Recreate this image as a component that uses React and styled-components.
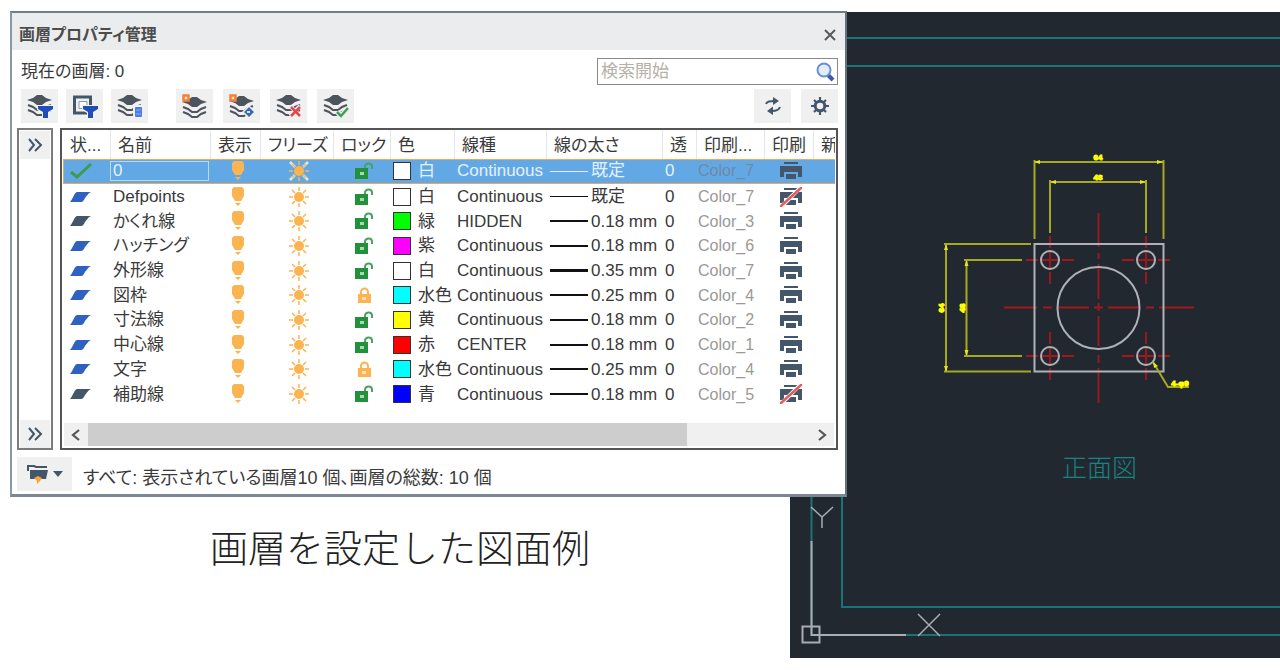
import React from 'react'
import styled, { createGlobalStyle, css } from 'styled-components'

const GlobalStyle = createGlobalStyle`
  * {
    box-sizing: border-box;
  }

  body {
    margin: 0;
    background: #fff;
    color: #3a3a3a;
    font-family: 'Liberation Sans', 'Noto Sans CJK JP', sans-serif;
    font-size: 17px;
    line-height: 20px;
    font-feature-settings: 'palt';
  }

  button, input {
    font: inherit;
    font-feature-settings: inherit;
    color: inherit;
    border: 0;
    padding: 0;
    margin: 0;
    background: none;
  }

  svg {
    display: block;
    flex: none;
  }
`

// The dialog overlaps the left edge of the drawing by one shared column
const Page = styled.main`
  display: grid;
  grid-template-columns: minmax(0, 780fr) 57px minmax(0, 433fr);
  grid-template-rows: auto 1fr;
  padding: 11px 0 11px 10px;
`

const Dialog = styled.section`
  grid-area: 1 / 1 / 2 / 3;
  z-index: 1;
  background: #fff;
  border-style: solid;
  border-width: 2px 2px 3px;
  border-color: #6f7d8f #66717f #7d8793 #8b98a8;
`

const TitleBar = styled.header`
  display: flex;
  align-items: center;
  justify-content: space-between;
  height: 37px;
  padding: 6px 8px 0 7px;
  background: #ebeced;
`

const Title = styled.h1`
  margin: 0;
  font-size: 16px;
  font-weight: 700;
  color: #4c4c4c;
`

const Info = styled.div`
  display: flex;
  align-items: center;
  justify-content: space-between;
  padding: 8px 7px 4px 9px;
`

const SearchBox = styled.label`
  display: flex;
  align-items: center;
  width: 241px;
  height: 27px;
  padding: 0 2px 0 3px;
  border: 1px solid #8a8a8a;
  background: #fff;
`

const SearchInput = styled.input`
  flex: 1;
  min-width: 0;
  outline: none;

  &::placeholder {
    color: #b5b1a6;
    opacity: 1;
  }
`

const Toolbar = styled.div`
  display: flex;
  gap: 28px;
  padding: 0 7px 0 9px;
`

const ToolGroup = styled.div`
  display: flex;
  gap: ${props => props.$gap}px;
  margin-left: ${props => props.$end ? 'auto' : 0};
`

const ToolButton = styled.button`
  display: flex;
  align-items: center;
  justify-content: center;
  width: 37px;
  height: 34px;
  background: #f0f0f0;
`

const Body = styled.div`
  display: flex;
  gap: 7px;
  padding: 5px 7px 7px 5px;
`

const FilterStrip = styled.div`
  display: flex;
  flex-direction: column;
  justify-content: space-between;
  width: 36px;
  border: 2px solid #7b7b7b;
  padding: 1px 1px 0;
`

const StripButton = styled.button`
  display: flex;
  align-items: center;
  justify-content: center;
  height: 28px;
  background: #f0f0f0;
`

const ListPanel = styled.div`
  flex: 1;
  min-width: 0;
  border: 2px solid #555;
  padding: 0 1px 2px;
`

const Table = styled.table`
  width: 100%;
  height: 276px;
  table-layout: fixed;
  border-collapse: separate;
  border-spacing: 0;
`

const HeadCell = styled.th`
  width: ${props => props.$width ? `${props.$width}px` : 'auto'};
  height: 29px;
  padding: 2px 0 0 7px;
  border-left: 1px solid #e6e6e6;
  font-weight: 400;
  text-align: left;
  white-space: nowrap;
  overflow: hidden;

  &:first-child {
    border-left: 0;
  }
`

const Cell = styled.td`
  padding: 1px 0 0 3px;
  line-height: 21px;
  white-space: nowrap;
`

const Row = styled.tr`
  ${props => props.$selected && css`
    color: #e4f1fc;
    background: #62a8e5;

    & > ${Cell} {
      padding-top: 0;
      padding-bottom: 0;
      border-top: 1px solid #eda75c;
      border-bottom: 1px solid #eda75c;
      line-height: 20px;
    }

    & > ${Cell}:first-child {
      border-left: 1px solid #eda75c;
    }
  `}
`

const StatusCell = styled(Cell)`
  padding-left: 6px;
`

const IconCell = styled(Cell)`
  padding-left: 5px;

  & > svg {
    margin: 0 auto;
  }
`

const StyleCell = styled(Cell)`
  padding-left: 2px;
  color: ${props => props.$selected ? '#6f8aa5' : '#999'};
  font-size: 16px;
`

const NameInput = styled.input`
  display: block;
  width: 99px;
  height: 20px;
  margin-left: -3px;
  padding-left: 2px;
  border: 1px solid #b9d9f5;
  outline: none;
`

const Pair = styled.div`
  display: flex;
  align-items: center;
  gap: ${props => props.$gap}px;
`

const Swatch = styled.span`
  width: 18px;
  height: 18px;
  border: 1px solid #333;
  background: ${props => props.$color};
`

const Weight = styled.span`
  width: 38px;
  height: ${props => props.$size}px;
  margin-left: 1px;
  background: ${props => props.$light ? '#e4f1fc' : '#111'};
`

const ScrollBar = styled.div`
  display: flex;
  align-items: stretch;
  height: 23px;
  margin: 17px 1px 0;
  background: #f0f0f0;
`

const ScrollButton = styled.button`
  display: flex;
  align-items: center;
  justify-content: center;
  width: 24px;
`

const ScrollTrack = styled.div`
  flex: 1;
`

const ScrollThumb = styled.div`
  width: 83%;
  height: 100%;
  background: #cdcdcd;
`

const Footer = styled.footer`
  display: flex;
  align-items: center;
  gap: 11px;
  padding: 0 5px 3px;
`

const StateButton = styled.button`
  display: flex;
  align-items: center;
  justify-content: center;
  gap: 4px;
  width: 55px;
  height: 34px;
  background: #f0f0f0;
`

const StatusText = styled.p`
  margin: 0;
  padding-top: 8px;
  font-size: 18px;
`

const Caption = styled.p`
  grid-area: 2 / 1 / 3 / 2;
  margin: 0;
  padding-top: 21px;
  font-family: 'Noto Sans CJK JP', sans-serif;
  font-size: 38px;
  font-weight: 300;
  line-height: 56px;
  font-feature-settings: normal;
  text-align: center;
  color: #222;
`

const Drawing = styled.svg`
  grid-area: 1 / 2 / 3 / 4;
  width: 100%;
  height: auto;
  margin-top: 1px;
  background: #212830;
`

const SLATE = '#44566a'
const INK = '#4c545e'

const Stack = ({ shift = 0 }) => (
  <g>
    <path d={`M0 ${6 + shift} L6 ${4 + shift} L10 ${1 + shift} H15 L19 ${4 + shift} L25 ${6 + shift} L19 ${8 + shift} L15 ${11 + shift} H10 L6 ${8 + shift} Z`} fill={INK} />
    <path d={`M1 ${11 + shift} L6 ${13 + shift} L10 ${16 + shift} H15 L19 ${13 + shift} L24 ${11 + shift} M1 ${16 + shift} L6 ${18 + shift} L10 ${21 + shift} H15 L19 ${18 + shift} L24 ${16 + shift}`} fill="none" stroke={INK} strokeWidth="2" />
  </g>
)

const ToolIcon = ({ children }) => <svg width="26" height="24" viewBox="0 0 26 24">{children}</svg>

const Spark = () => <rect x="1.5" y="1.5" width="5" height="5" fill="#ffe9b0" stroke="#f08040" strokeWidth="2.5" />

const Funnel = () => (
  <g>
    <path d="M10 11h16v5l-5 3v5h-6v-5l-5-3z" fill="#f0f0f0" />
    <path d="M11 12h15v3l-5 3v6h-5v-6l-5-3z" fill="#1f4fb5" />
  </g>
)

const filterTools = [
  ['新規プロパティ フィルター', <><Stack /><Funnel /></>],
  ['新規グループ フィルター', <><path d="M2.500 3h16v16h-16z" fill="none" stroke={SLATE} strokeWidth="3" /><path d="M7 7.500h8v7H7z" fill="#fff" stroke="#8b97a5" strokeWidth="1" /><Funnel /></>],
  ['画層状態管理', <><Stack /><rect x="16" y="11" width="10" height="13" fill="#f0f0f0" /><rect x="18" y="13" width="7" height="10" rx="1" fill="#4d79ea" /><path d="M19 16h5M19 20h5" stroke="#8fb0fa" /></>]
]

const layerTools = [
  ['新規作成', <><Stack shift={2} /><Spark /></>],
  ['新規作成 (フリーズ)', <><Stack shift={1} /><Spark /><path d="M20 12l6 6-6 6-6-6z" fill="#3d68b8" stroke="#f0f0f0" strokeWidth="1.500" /><path d="M18 18h3" stroke="#d5e2fa" strokeWidth="2" /></>],
  ['削除', <><Stack /><path d="M14 12l10 10M24 12L14 22" stroke="#f0f0f0" strokeWidth="4" /><path d="M15 13l9 9M24 13l-9 9" stroke="#e0484e" strokeWidth="2.500" /></>],
  ['現在に設定', <><Stack /><path d="M14 18l4 4 7-8" fill="none" stroke="#f0f0f0" strokeWidth="5" /><path d="M14 18l4 4 7-8" fill="none" stroke="#3f9f56" strokeWidth="2.500" /></>]
]

const RefreshIcon = () => (
  <svg width="18" height="18" viewBox="0 0 18 18" fill="none" stroke={SLATE} strokeWidth="2">
    <path d="M2 7c1-3 4-3 8-3" />
    <path d="M9 0l6 4-6 4z" fill={SLATE} stroke="none" />
    <path d="M16 10c-1 3-4 4-8 4" />
    <path d="M9 9.500L3 14l6 4z" fill={SLATE} stroke="none" />
  </svg>
)

const GearIcon = () => (
  <svg width="18" height="18" viewBox="0 0 18 18" fill="none" stroke={SLATE}>
    <circle cx="9" cy="9" r="4.800" strokeWidth="3" />
    <path d="M9 0v4M9 14v4M0 9h4M14 9h4M3 3l2 2M13 13l2 2M15 3l-2 2M5 13l-2 2" strokeWidth="2.200" />
  </svg>
)

const SearchIcon = () => (
  <svg width="20" height="20" viewBox="0 0 20 20">
    <path d="M12 12l6 6" stroke="#3b5da8" strokeWidth="4" />
    <circle cx="9" cy="8" r="6.500" fill="#e3ecfa" stroke="#6a8fd0" strokeWidth="2" />
  </svg>
)

const CloseIcon = () => (
  <svg width="14" height="14" viewBox="0 0 14 14">
    <path d="M2 2l10 10M12 2L2 12" stroke="#5a5a5a" strokeWidth="2" />
  </svg>
)

const DoubleChevron = () => (
  <svg width="16" height="14" viewBox="0 0 16 14">
    <path d="M2 1l5 6-5 6M8 1l6 6-6 6" fill="none" stroke={SLATE} strokeWidth="2" />
  </svg>
)

const Chevron = ({ left }) => (
  <svg width="10" height="12" viewBox="0 0 10 12">
    <path d={left ? 'M8 1L2 6l6 5' : 'M2 1l6 5-6 5'} fill="none" stroke="#555" strokeWidth="2.200" />
  </svg>
)

const StateIcon = () => (
  <svg width="22" height="20" viewBox="0 0 22 20">
    <path d="M1 7V2h6l2 1h11" fill="none" stroke={SLATE} strokeWidth="2" />
    <path d="M3 6h18l-2 9H3z" fill={SLATE} />
    <path d="M7 14l4-2 4 2-2 3-3 3v-3z" fill="#f7a63a" />
  </svg>
)

const CheckIcon = () => (
  <svg width="22" height="16" viewBox="0 0 22 16">
    <path d="M1 9l6 5L21 1" fill="none" stroke="#3d9b4c" strokeWidth="3" />
  </svg>
)

const LayerIcon = ({ used }) => (
  <svg width="23" height="14" viewBox="0 0 23 14">
    <path d="M8 2h14c-3 1-4 4-6 6-1 2-2 4-4 4H1c3-3 4-9 7-10z" fill={used ? '#2f62c0' : '#44566a'} />
  </svg>
)

const BulbIcon = () => (
  <svg width="14" height="20" viewBox="0 0 14 20">
    <path d="M3 0h8l2 2v7l-3 5H4L1 9V2z" fill="#fbb450" />
    <path d="M4 16h6l-3 3z" fill="#fbb450" />
  </svg>
)

const SunIcon = ({ boxed }) => (
  <svg width="20" height="20" viewBox="0 0 20 20">
    {boxed && <path d="M1 1l5 5M19 1l-5 5M1 19l5-5M19 19l-5-5" stroke="#e3edd8" strokeWidth="2.500" />}
    <circle cx="10" cy="10" r="5" fill="#fbb450" />
    <path d="M10 0v4M10 16v4M0 10h4M16 10h4M3 3l3 3M17 3l-3 3M3 17l3-3M17 17l-3-3" stroke="#fbb450" strokeWidth="1.500" />
  </svg>
)

const LockIcon = ({ locked }) => (
  locked
    ? <svg width="20" height="18" viewBox="0 0 20 18">
      <path d="M7 9V6a3.500 3.500 0 0 1 7 0v3" fill="none" stroke="#fbb450" strokeWidth="2" />
      <rect x="4" y="8" width="13" height="9" fill="#fbb450" />
      <rect x="8" y="11" width="4" height="3" fill="#fde2b8" />
    </svg>
    : <svg width="20" height="18" viewBox="0 0 20 18">
      <path d="M11 7V5c0-4 6-5 7-1v3" fill="none" stroke="#45a560" strokeWidth="2" />
      <rect x="1" y="6" width="13" height="11" fill="#23913c" />
      <rect x="6" y="10" width="4" height="3" fill="#a5dab0" />
    </svg>
)

const PrinterIcon = ({ off }) => (
  <svg width="22" height="20" viewBox="0 0 22 20">
    <path d="M4 2h14" stroke={SLATE} strokeWidth="2" />
    <path d="M0 5h22v11h-4v-5H4v5H0z" fill={SLATE} />
    <path d="M6 13h10v5H6z" fill={SLATE} />
    {off && <path d="M1 20L21 0" stroke="#fff" strokeWidth="4" />}
    {off && <path d="M0 20L22 0" stroke="#e8595c" strokeWidth="2.500" />}
  </svg>
)

const columns = [
  ['状...', 47], ['名前', 100], ['表示', 50], ['フリーズ', 73], ['ロック', 57], ['色', 64],
  ['線種', 92], ['線の太さ', 116], ['透', 34], ['印刷...', 68], ['印刷', 49], ['新']
]

const layers = [
  { name: '0', current: true, color: ['#fff', '白'], type: 'Continuous', weight: '既定', size: 1, plot: 'Color_7' },
  { name: 'Defpoints', used: true, color: ['#fff', '白'], type: 'Continuous', weight: '既定', size: 1, plot: 'Color_7', off: true },
  { name: 'かくれ線', color: ['#00ff00', '緑'], type: 'HIDDEN', weight: '0.18 mm', size: 2, plot: 'Color_3' },
  { name: 'ハッチング', used: true, color: ['#ff00ff', '紫'], type: 'Continuous', weight: '0.18 mm', size: 2, plot: 'Color_6' },
  { name: '外形線', used: true, color: ['#fff', '白'], type: 'Continuous', weight: '0.35 mm', size: 3, plot: 'Color_7' },
  { name: '図枠', used: true, locked: true, color: ['#00ffff', '水色'], type: 'Continuous', weight: '0.25 mm', size: 2, plot: 'Color_4' },
  { name: '寸法線', used: true, color: ['#ffff00', '黄'], type: 'Continuous', weight: '0.18 mm', size: 2, plot: 'Color_2' },
  { name: '中心線', used: true, color: ['#ff0000', '赤'], type: 'CENTER', weight: '0.18 mm', size: 2, plot: 'Color_1' },
  { name: '文字', used: true, locked: true, color: ['#00ffff', '水色'], type: 'Continuous', weight: '0.25 mm', size: 2, plot: 'Color_4' },
  { name: '補助線', color: ['#0000ff', '青'], type: 'Continuous', weight: '0.18 mm', size: 2, plot: 'Color_5', off: true }
]

const LayerRow = ({ layer }) => (
  <Row $selected={layer.current}>
    <StatusCell>{layer.current ? <CheckIcon /> : <LayerIcon used={layer.used} />}</StatusCell>
    <Cell>{layer.current ? <NameInput aria-label="画層名" defaultValue={layer.name} /> : layer.name}</Cell>
    <IconCell><BulbIcon /></IconCell>
    <IconCell><SunIcon boxed={layer.current} /></IconCell>
    <IconCell><LockIcon locked={layer.locked} /></IconCell>
    <Cell><Pair $gap={7}><Swatch $color={layer.color[0]} />{layer.color[1]}</Pair></Cell>
    <Cell>{layer.type}</Cell>
    <Cell><Pair $gap={3}><Weight $size={layer.size} $light={layer.current} />{layer.weight}</Pair></Cell>
    <Cell>0</Cell>
    <StyleCell $selected={layer.current}>{layer.plot}</StyleCell>
    <IconCell><PrinterIcon off={layer.off} /></IconCell>
    <Cell />
  </Row>
)

const Tools = ({ items }) => items.map(([label, icon]) =>
  <ToolButton key={label} type="button" aria-label={label}><ToolIcon>{icon}</ToolIcon></ToolButton>
)

const holes = [[260, 248], [356, 248], [260, 344], [356, 344]]

const FrontView = () => (
  <Drawing viewBox="0 0 490 646" role="img" aria-label="正面図">
    <g fill="none" stroke="#1a7475" strokeWidth="2">
      <path d="M490 26H21.500V623H490" />
      <path d="M490 54H52V595H490" />
    </g>

    <g fill="none" stroke="#a9acb1" strokeWidth="2">
      <path d="M21.500 529V623H116" />
      <rect x="12.500" y="614.500" width="17" height="16" />
      <path d="M21 495l11 10 11-10M32 505v11M128 602l22 22M150 602l-22 22" strokeWidth="1.500" />
    </g>

    <g fill="none" stroke="#a3181d" strokeWidth="1.800">
      <path d="M308.500 201v34M308.500 241v6M308.500 252v35M308.500 291v8M308.500 304v30M308.500 343v8M308.500 356v35" />
      <path d="M214 295.500h33M253 295.500h9M267 295.500h32M304 295.500h9M318 295.500h32M356 295.500h8M369 295.500h35" />
      {holes.map(([x, y]) => <path key={`${x}-${y}`} d={`M${x - 24} ${y}h12M${x - 9} ${y}h18M${x + 12} ${y}h12M${x} ${y - 24}v12M${x} ${y - 9}v18M${x} ${y + 12}v12`} />)}
    </g>

    <g fill="none" stroke="#b0b1b8" strokeWidth="2">
      <rect x="244.500" y="232" width="129" height="127.500" />
      <circle cx="308.500" cy="296" r="41" />
      {holes.map(([x, y]) => <circle key={`${x}-${y}`} cx={x} cy={y} r="9" />)}
    </g>

    <g fill="none" stroke="#a5a821" strokeWidth="2">
      <path d="M244.500 227V148M373.500 227V148M244 150H373" />
      <path d="M260 221V168M356 221V168M260 170H356" />
      <path d="M241 232H154M241 359.500H154M156 232V360" />
      <path d="M232 248H174M232 344H174M176.500 248V344" />
      <path d="M363 350L378 375H399" />
    </g>
    <path d="M244 150l6-2v4zM373 150l-6-2v4zM260 170l6-2v4zM356 170l-6-2v4zM156 232l-2 6h4zM156 360l-2-6h4zM176.500 248l-2 6h4zM176.500 344l-2-6h4zM363 350l1 6 4-2z" fill="#e6e61a" />

    <g fill="#ffff00" stroke="#ffff00" fontFamily="Liberation Sans, sans-serif" fontSize="8" fontWeight="700" textAnchor="middle">
      <text x="308" y="148">64</text>
      <text x="308" y="168">48</text>
      <text transform="translate(154 296) rotate(-90)">64</text>
      <text transform="translate(175 296) rotate(-90)">48</text>
      <text x="390" y="374">4-φ9</text>
    </g>

    <text x="272" y="465" fill="#1c8283" fontFamily="Noto Sans CJK JP, sans-serif" fontSize="25" fontWeight="300">正面図</text>
  </Drawing>
)

export default function App () {
  return <Page>
    <GlobalStyle />
    <Dialog aria-label="画層プロパティ管理">
      <TitleBar>
        <Title>画層プロパティ管理</Title>
        <button type="button" aria-label="閉じる"><CloseIcon /></button>
      </TitleBar>

      <Info>
        <span>現在の画層: 0</span>
        <SearchBox>
          <SearchInput type="text" placeholder="検索開始" aria-label="検索開始" />
          <SearchIcon />
        </SearchBox>
      </Info>

      <Toolbar>
        <ToolGroup $gap={8}><Tools items={filterTools} /></ToolGroup>
        <ToolGroup $gap={10}><Tools items={layerTools} /></ToolGroup>
        <ToolGroup $gap={10} $end>
          <ToolButton type="button" aria-label="更新"><RefreshIcon /></ToolButton>
          <ToolButton type="button" aria-label="設定"><GearIcon /></ToolButton>
        </ToolGroup>
      </Toolbar>

      <Body>
        <FilterStrip>
          <StripButton type="button" aria-label="フィルターを展開"><DoubleChevron /></StripButton>
          <StripButton type="button" aria-label="フィルターを展開"><DoubleChevron /></StripButton>
        </FilterStrip>
        <ListPanel>
          <Table>
            <thead>
              <tr>
                {columns.map(([label, width], index) => <HeadCell key={index} scope="col" $width={width}>{label}</HeadCell>)}
              </tr>
            </thead>
            <tbody>
              {layers.map(layer => <LayerRow key={layer.name} layer={layer} />)}
            </tbody>
          </Table>
          <ScrollBar>
            <ScrollButton type="button" aria-label="左へスクロール"><Chevron left /></ScrollButton>
            <ScrollTrack><ScrollThumb /></ScrollTrack>
            <ScrollButton type="button" aria-label="右へスクロール"><Chevron /></ScrollButton>
          </ScrollBar>
        </ListPanel>
      </Body>

      <Footer>
        <StateButton type="button" aria-label="画層フィルター">
          <StateIcon />
          <svg width="10" height="6" viewBox="0 0 10 6"><path d="M0 0h10L5 6z" fill={SLATE} /></svg>
        </StateButton>
        <StatusText>すべて: 表示されている画層10 個、画層の総数: 10 個</StatusText>
      </Footer>
    </Dialog>

    <FrontView />
    <Caption>画層を設定した図面例</Caption>
  </Page>
}
